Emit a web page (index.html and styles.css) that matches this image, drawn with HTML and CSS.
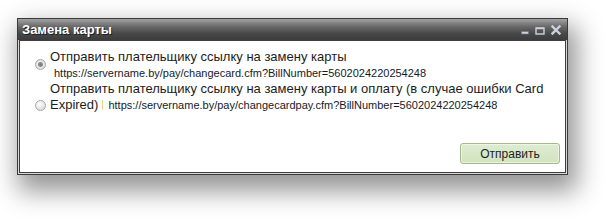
FILE: index.html
```html
<!DOCTYPE html>
<html lang="ru">
<head>
    <meta charset="UTF-8" />
    <title>Замена карты</title>
    <link rel="stylesheet" href="styles.css">
</head>
<body>
    <div class="window">
        <div class="title-bar">
            <span class="title">Замена карты</span>
            <div class="tools">
                <svg class="tool" width="8" height="9" viewBox="0 0 8 9">
                    <rect x="0.5" y="5.5" width="7" height="2.5" fill="#c9d3dd" stroke="#6b7580" stroke-width="0.6"/>
                </svg>
                <svg class="tool" width="10" height="9" viewBox="0 0 10 9">
                    <rect x="1" y="2" width="8" height="6" fill="none" stroke="#c9d3dd" stroke-width="1.4"/>
                    <rect x="1" y="1.6" width="8" height="1.6" fill="#c9d3dd"/>
                </svg>
                <svg class="tool" width="10" height="10" viewBox="0 0 10 10">
                    <path d="M1.5 1.5 L8.5 8.5 M8.5 1.5 L1.5 8.5" stroke="#c9d3dd" stroke-width="2.4" stroke-linecap="square"/>
                </svg>
            </div>
        </div>

        <div class="body">
            <div class="options">
                <label class="opt">
                    <input type="radio" name="mode" class="radio radio-first" checked>
                    <span class="opt-text">
                        <span class="line">Отправить плательщику ссылку на замену карты</span>
                        <span class="line"><span class="url">https://servername.by/pay/changecard.cfm?BillNumber=5602024220254248</span></span>
                    </span>
                </label>
                <label class="opt">
                    <input type="radio" name="mode" class="radio radio-second">
                    <span class="opt-text">
                        <span class="line">Отправить плательщику ссылку на замену карты и оплату (в случае ошибки Card</span>
                        <span class="line">Expired)<span class="mark"></span><span class="url">https://servername.by/pay/changecardpay.cfm?BillNumber=5602024220254248</span></span>
                    </span>
                </label>
            </div>
            <div class="footer">
                <button class="btn">Отправить</button>
            </div>
        </div>
    </div>
</body>
</html>
```

FILE: styles.css
```css
html, body {
    height: 100%;
}

body {
    margin: 0;
    padding: 18px 0 0 17px;
    box-sizing: border-box;
    background: #ffffff;
    font-family: "Liberation Sans", Arial, sans-serif;
    color: #1c1c1c;
}

.window {
    width: 547px;
    border: 1px solid #3a3a3a;
    background: #d9d9d9;
    padding: 0 1px 1px 1px;
    box-shadow: 5px 12px 24px 4px rgba(0,0,0,0.42);
}

.title-bar {
    height: 21px;
    display: flex;
    align-items: center;
    justify-content: space-between;
    margin: 0 -1px;
    padding: 0 6px 0 4px;
    background: linear-gradient(#a3a3a3, #6a6a6a 35%, #474747 70%, #3c3c3c);
}

.title {
    color: #ffffff;
    font-size: 13px;
    font-weight: bold;
    text-shadow: 1px 1px 0 #1e1e1e;
}

.tools {
    display: flex;
    align-items: center;
    gap: 6px;
    margin-top: 1px;
}

.tool {
    display: block;
}

.body {
    height: 131px;
    display: flex;
    flex-direction: column;
    background: #ffffff;
    border: 1px solid #3e3e3e;
}

.options {
    padding: 8px 10px 0 15px;
}

.opt {
    display: flex;
    align-items: flex-start;
    font-size: 13px;
    line-height: 16px;
}

.radio {
    appearance: none;
    -webkit-appearance: none;
    flex: none;
    width: 11px;
    height: 11px;
    margin: 0 4px 0 0;
    border: 1px solid #a6a6a6;
    border-radius: 50%;
    background: radial-gradient(circle at 40% 35%, #ffffff, #e4e4e4 60%, #cdcdcd);
    box-sizing: border-box;
}

.radio:checked {
    background: radial-gradient(circle, #7b7b7b 0, #8d8d8d 2px, #e9e9e9 3px, #d6d6d6 100%);
}

.radio-first {
    margin-top: 10px;
}

.radio-second {
    margin-top: 19px;
}

.opt-text {
    flex: 1;
}

.line {
    display: block;
    white-space: nowrap;
}

.url {
    margin-left: 4px;
    font-size: 11px;
    color: #151a2a;
}

.mark {
    display: inline-block;
    width: 1px;
    height: 10px;
    margin: 0 1px 0 4px;
    vertical-align: -1px;
    background: #f2cf83;
}

.footer {
    margin-top: auto;
    display: flex;
    justify-content: flex-end;
    padding: 0 5px 8px 0;
}

.btn {
    width: 100px;
    height: 21px;
    padding: 0;
    font-family: "Liberation Sans", Arial, sans-serif;
    font-size: 12px;
    color: #1e1e1e;
    background: linear-gradient(#deecd1, #d1e4c0);
    border: 1px solid #a3b98b;
    border-radius: 3px;
    box-shadow: inset 0 0 0 1px rgba(255,255,255,0.5);
}
```
